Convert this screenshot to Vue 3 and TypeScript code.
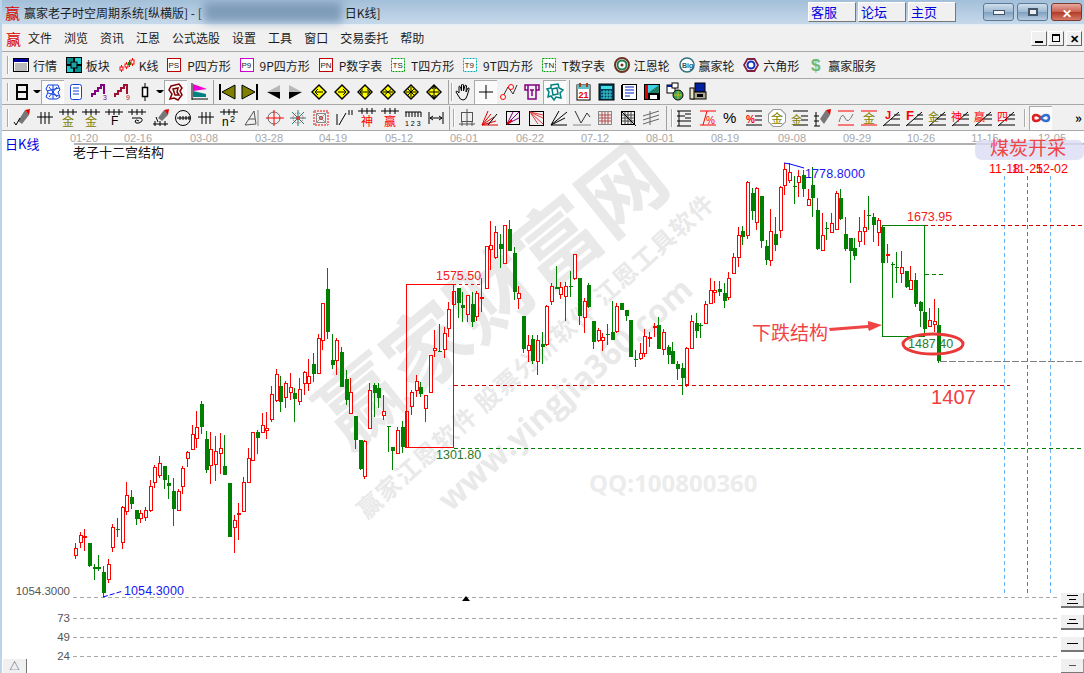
<template>
  <div class="window">
    <div class="titlebar">
      <span class="logo">赢</span>
      <span class="title">赢家老子时空周期系统[纵横版] - [</span>
      <span class="blur"></span>
      <span class="title">日K线]</span>
      <div class="links">
        <button v-for="l in links" :key="l" class="link">{{ l }}</button>
      </div>
      <div class="caps">
        <span class="cap"><i class="cap-min"></i></span>
        <span class="cap"><i class="cap-max"></i></span>
        <span class="cap cap-close">✕</span>
      </div>
    </div>

    <div class="menubar">
      <span class="logo logo-sm">赢</span>
      <span v-for="m in menus" :key="m" class="menu">{{ m }}</span>
      <div class="mdi">
        <span class="mdi-btn"><i class="mdi-min"></i></span>
        <span class="mdi-btn"><i class="mdi-restore"></i></span>
        <span class="mdi-btn mdi-x">✕</span>
      </div>
    </div>

    <div class="row row-main">
      <i class="grip"></i>
      <div v-for="a in mainTools" :key="a.label" class="tool">
        <svg v-if="a.narrow" class="ic-n" viewBox="0 0 14 14" v-html="a.svg"></svg>
        <svg v-else class="ic-w" viewBox="0 0 16 16" v-html="a.svg"></svg>
        <span>{{ a.label }}</span>
      </div>
    </div>

    <div class="row row-icons">
      <template v-for="(b, i) in row3" :key="i">
        <i v-if="b.kind === 'grip'" class="grip" :class="b.cls"></i>
        <i v-else-if="b.kind === 'sep'" class="sep" :class="b.cls"></i>
        <i v-else-if="b.kind === 'caret'" class="caret" :class="b.cls"></i>
        <span v-else class="slot" :class="{ sel: b.sel }"><svg viewBox="0 0 20 20" v-html="b.svg"></svg></span>
      </template>
    </div>

    <div class="row row-icons">
      <template v-for="(b, i) in row4" :key="i">
        <i v-if="b.kind === 'grip'" class="grip" :class="b.cls"></i>
        <i v-else-if="b.kind === 'sep'" class="sep" :class="b.cls"></i>
        <span v-else class="slot" :class="{ sel: b.sel }"><svg viewBox="0 0 20 20" v-html="b.svg"></svg></span>
      </template>
      <span class="more">»</span>
    </div>

    <div class="chart">
      <svg class="plot" viewBox="0 131 1084 542" width="1084" height="542">
        <!-- watermark -->
        <g class="wm">
          <text class="wm-big" x="492" y="326" transform="rotate(-39 492 296)" text-anchor="middle">赢家财富网</text>
          <text class="wm-mid" x="535" y="365" transform="rotate(-42 535 355)" text-anchor="middle">赢家江恩软件  股票分析软件  江恩工具软件</text>
          <text class="wm-url" x="566" y="405" transform="rotate(-42 566 395)" text-anchor="middle">www.yingjia360.com</text>
          <text class="wm-qq" x="589" y="492">QQ:100800360</text>
        </g>

        <!-- date axis -->
        <line x1="74" y1="144" x2="1084" y2="144" stroke="#b0b0b0" stroke-width="2" />
        <text v-for="d in dates" :key="d.t" class="date" :x="d.x" y="142" text-anchor="middle">{{ d.t }}</text>

        <text class="period" x="5" y="149">日K线</text>
        <text class="struct" x="73" y="157">老子十二宫结构</text>

        <!-- guide lines -->
        <line v-for="y in [597, 618, 637, 656]" :key="y" x1="73" :y1="y + 0.5" x2="1060" :y2="y + 0.5" class="guide" />
        <line x1="1004.5" y1="176" x2="1004.5" y2="594" stroke="#6ab4f5" stroke-dasharray="4 3" />
        <line x1="1027.5" y1="176" x2="1027.5" y2="594" stroke="#c85050" stroke-dasharray="4 3" />
        <line x1="1050.5" y1="176" x2="1050.5" y2="594" stroke="#6ab4f5" stroke-dasharray="4 3" />

        <line x1="924" y1="225.5" x2="1084" y2="225.5" stroke="#d00000" stroke-dasharray="4 3" />
        <line x1="925" y1="274.5" x2="946" y2="274.5" stroke="#008000" stroke-dasharray="4 3" />
        <line x1="940" y1="361.5" x2="1084" y2="361.5" stroke="#808080" stroke-dasharray="7 2" />
        <line x1="454" y1="385.5" x2="1010" y2="385.5" stroke="#d00000" stroke-dasharray="4 3" />
        <line x1="454" y1="448.5" x2="1084" y2="448.5" stroke="#008000" stroke-dasharray="4 3" />
        <line x1="453" y1="284.5" x2="480" y2="284.5" stroke="#f00" stroke-dasharray="3 3" />

        <!-- candles -->
        <g v-for="c in candles" :key="c[0]">
          <line :x1="c[0] + 0.5" :y1="c[1]" :x2="c[0] + 0.5" :y2="c[2]" :stroke="c[5] ? '#f00' : '#008000'" />
          <rect v-if="c[5]" :x="c[0] - 0.5" :y="c[3] + 0.5" width="3" :height="Math.max(c[4] - c[3], 1)" fill="#fff" stroke="#f00" />
          <rect v-else :x="c[0] - 1" :y="c[3]" width="4" :height="Math.max(c[4] - c[3], 1)" fill="#008000" />
        </g>

        <!-- structure boxes -->
        <rect x="406.5" y="284.5" width="47" height="163" fill="none" stroke="#f00" />
        <rect x="882.5" y="225.5" width="42" height="111" fill="none" stroke="#008000" />

        <!-- labels -->
        <text class="val red" x="436" y="280">1575.50</text>
        <text class="val green" x="436" y="459">1301.80</text>
        <text class="val red" x="907" y="221">1673.95</text>
        <text class="val green" x="908" y="348">1487.40</text>
        <text class="val blue mono" x="805" y="178">1778.8000</text>
        <text class="val blue mono" x="124" y="595">1054.3000</text>
        <polyline points="784,163 790,164 804,168" fill="none" stroke="#00f" />
        <line x1="103" y1="597" x2="123" y2="591" stroke="#00f" stroke-dasharray="5 2" />

        <text class="axis" x="70" y="595" text-anchor="end">1054.3000</text>
        <text class="axis" x="70" y="622" text-anchor="end">73</text>
        <text class="axis" x="70" y="641" text-anchor="end">49</text>
        <text class="axis" x="70" y="660" text-anchor="end">24</text>
        <polygon points="462,601 470,601 466,596" fill="#000" />

        <!-- hand drawn notes -->
        <ellipse cx="933" cy="344" rx="30" ry="10" fill="none" stroke="#e83838" stroke-width="3" />
        <text class="note" x="752" y="340">下跌结构</text>
        <polygon points="829,328 868,325 868,321 882,325 869,331 868,328 830,331" fill="#f04545" />
        <text class="note-num" x="931" y="404">1407</text>

        <!-- sector tag -->
        <rect x="975" y="140" width="109" height="20" rx="7" fill="#dcdcf6" opacity="0.8" />
        <text class="sector" x="990" y="155">煤炭开采</text>
        <text class="val red ticks" x="989" y="173">11-18</text>
        <text class="val red ticks" x="1012" y="173">11-25</text>
        <text class="val red ticks" x="1036" y="173">12-02</text>
      </svg>

      <div class="zoom">
        <span class="zoom-btn"><i></i><i class="short"></i><i></i></span>
        <span class="zoom-btn"><i class="short"></i><i></i></span>
        <span class="zoom-btn"><i></i></span>
        <span class="zoom-btn"><i class="mini"></i></span>
      </div>
      <span class="tab">△</span>
    </div>
  </div>
</template>

<script setup lang="ts">
type Bar = { kind?: 'grip' | 'sep' | 'caret'; cls?: string; svg?: string; sel?: boolean }

const links = ['客服', '论坛', '主页']
const menus = ['文件', '浏览', '资讯', '江恩', '公式选股', '设置', '工具', '窗口', '交易委托', '帮助']

const dates = [
  { t: '01-20', x: 84 }, { t: '02-16', x: 138 }, { t: '03-08', x: 204 }, { t: '03-28', x: 269 },
  { t: '04-19', x: 333 }, { t: '05-12', x: 399 }, { t: '06-01', x: 464 }, { t: '06-22', x: 530 },
  { t: '07-12', x: 595 }, { t: '08-01', x: 660 }, { t: '08-19', x: 725 }, { t: '09-08', x: 792 },
  { t: '09-29', x: 857 }, { t: '10-26', x: 921 }, { t: '11-15', x: 985 }, { t: '12-05', x: 1052 }
]

// svg bits
const tx = (x: number, y: number, s: string, fill: string, size: number, weight = 'normal') =>
  `<text x="${x}" y="${y}" fill="${fill}" font-size="${size}" font-weight="${weight}" font-family="Liberation Sans,Noto Sans CJK SC,sans-serif">${s}</text>`
const p = (d: string, stroke = '#000', w = 1) => `<path d="${d}" fill="none" stroke="${stroke}" stroke-width="${w}"/>`
const f = (pts: string, fill: string) => `<polygon points="${pts}" fill="${fill}"/>`
const box = (code: string, color: string, dash = false) =>
  `<rect x="0.5" y="0.5" width="13" height="13" fill="#fff" stroke="${color}" ${dash ? 'stroke-dasharray="2 1"' : ''}/>` + tx(1.5, 10, code, '#222', 8)

const mainTools = [
  { label: '行情', svg: '<rect x="0.5" y="1.5" width="15" height="13" fill="#fff" stroke="#000"/><rect x="1" y="2" width="14" height="3" fill="#0000a0"/>' + p('M2 7H14M2 9H14M2 11H14M2 13H14', '#777') },
  { label: '板块', svg: '<rect width="16" height="16" y="0" fill="#000"/><rect x="1" y="1" width="6" height="6" fill="#009090"/><rect x="9" y="1" width="6" height="6" fill="#20c8c8"/><rect x="1" y="9" width="6" height="6" fill="#20c8c8"/><rect x="9" y="9" width="6" height="6" fill="#009090"/><rect x="5" y="5" width="6" height="6" fill="#20a0a0" stroke="#000"/>' },
  { label: 'K线', svg: p('M2.5 8V15M7.5 5V12M13.5 1V9', '#f00') + p('M10.5 3V10', '#080') + '<rect x="1" y="10" width="3" height="3" fill="#fff" stroke="#f00"/><rect x="6" y="7" width="3" height="3" fill="#fff" stroke="#f00"/><rect x="9" y="5" width="3" height="3" fill="#080"/><rect x="12" y="3" width="3" height="4" fill="#fff" stroke="#f00"/>' },
  { label: 'P四方形', narrow: true, svg: box('PS', '#c00000') },
  { label: '9P四方形', narrow: true, svg: box('P9', '#d000d0') },
  { label: 'P数字表', narrow: true, svg: box('PN', '#c00000') },
  { label: 'T四方形', narrow: true, svg: box('TS', '#00a000', true) },
  { label: '9T四方形', narrow: true, svg: box('T9', '#00b0b0', true) },
  { label: 'T数字表', narrow: true, svg: box('TN', '#00a000', true) },
  { label: '江恩轮', svg: '<circle cx="8" cy="8" r="7" fill="#fff" stroke="#703020" stroke-width="2"/><circle cx="8" cy="8" r="4.5" fill="none" stroke="#208050" stroke-width="2"/><circle cx="8" cy="8" r="1.5" fill="#703020"/>' },
  { label: '赢家轮', svg: '<circle cx="8" cy="8" r="7" fill="#fff" stroke="#307080" stroke-width="1.5"/>' + tx(3, 10.5, 'Big', '#206070', 7, 'bold') },
  { label: '六角形', svg: f('4,1 12,1 16,8 12,15 4,15 0,8', '#802040') + f('5,3 11,3 14,8 11,13 5,13 2,8', '#fff') + '<circle cx="8" cy="8" r="3.5" fill="none" stroke="#1030c0" stroke-width="2"/>' },
  { label: '赢家服务', svg: tx(3, 14, '$', '#70b870', 17, 'bold') }
]

const diamond = (inner: string) => f('10,2 18,10 10,18 2,10', '#000') + f('10,4 16,10 10,16 4,10', '#ff0') + p(inner)
const ic = (svg: string, sel = false): Bar => ({ svg, sel })
const ticks = (y: number, xs: number[], c = '#000') => p(`M1 ${y}H19` + xs.map(x => `M${x} ${y - 3}V${y + 3}`).join(''), c)
const fan = (c = '#000') => p('M2 17H18M9 11H18M12 7H18M1 18L17 4', c)
const topBot = (c = '#f00') => p('M2 3H18M2 17H18', c)

const row3: Bar[] = [
  { kind: 'grip', cls: 'g0' },
  ic(p('M5 3H15V17H5ZM5 10H15', '#000', 2)),
  { kind: 'caret' },
  ic(p('M5 3H15L17 8 15 10 17 15 14 17H6L3 15 5 10 3 7ZM4 9L16 6M5 11L16 14M10 3V17M6 5L14 15M14 5L6 15', '#1040e0'), true),
  ic(`<rect x="4.5" y="2.5" width="11" height="15" rx="2" fill="#fff" stroke="#1040e0"/>` + p('M7 6H13M7 9H13M7 12H13', '#1040e0')),
  ic(p('M3 15V12H6V9H9V6H12V3H15V12', '#800080', 2) + tx(14, 18, '3', '#800080', 7)),
  ic(p('M3 15V12H6V9H9V6H12V3H15V12', '#a01030', 2) + tx(14, 18, '9', '#a01030', 7)),
  ic(p('M10 1V19') + '<rect x="7.5" y="5.5" width="5" height="9" fill="#fff" stroke="#000" stroke-width="1.5"/>'),
  { kind: 'caret', cls: 'c2' },
  ic(p('M5 4L13 2 16 6 14 9 16 13 12 18 8 16 4 17 6 12 3 8ZM7 7L12 6 11 10 13 13 9 13 8 10Z', '#800000', 1.5), true),
  ic(f('4,2 18,7 4,9', '#f000d0') + f('4,9 17,12 17,15 4,15', '#008080') + p('M3 1V18M3 17H19', '#000')),
  { kind: 'sep', cls: 's0' },
  ic(p('M3 2V18', '#000', 2) + f('18,3 18,17 5,10', '#808000') + p('M18 3V17L5 10Z')),
  ic(p('M17 2V18', '#000', 2) + f('2,3 2,17 15,10', '#808000') + p('M2 3V17L15 10Z')),
  ic(f('17,3 17,10 4,10', '#b8b8b8') + f('17,17 17,10 4,10', '#000')),
  ic(f('3,3 3,10 16,10', '#b8b8b8') + f('3,17 3,10 16,10', '#000')),
  ic(diamond('M6 10H14M6 10L9 7M6 10L9 13')),
  ic(diamond('M6 10H14M14 10L11 7M14 10L11 13')),
  ic(diamond('M5 10H15M5 10L8 7.5M5 10L8 12.5M15 10L12 7.5M15 10L12 12.5')),
  ic(diamond('M5 10H15M10 10L7 7.5M10 10L7 12.5M10 10L13 7.5M10 10L13 12.5')),
  ic(diamond('M10 5V15M5 10H15M7 7L13 13M13 7L7 13')),
  ic(diamond('M10 4V16M5 10H15M10 4L8 7M10 4L12 7M10 16L8 13M10 16L12 13')),
  { kind: 'sep', cls: 's1' },
  { kind: 'grip', cls: 'g2' },
  ic(p('M6 11V5Q6 3 7.5 5L8.5 9V3Q9.5 1 10.5 3V9L12 3.5Q13 2.5 13.5 4L13 10 15 6Q16.5 5.5 16 7.5L14 14Q13 18 10 18 7 18 5.5 14L3 10Q3 8.5 4.5 9.5Z')),
  ic(p('M10 3V17M3 10H17'), true),
  ic(p('M3 16L9 5 14 12 18 3', '#333') + '<circle cx="4" cy="15" r="2.5" fill="#fff" stroke="#f00"/><circle cx="12" cy="5" r="2.5" fill="#fff" stroke="#f00"/>'),
  ic(p('M3 3H17V8H14V17H6V8H3ZM6 3V8M14 3V8M8 8H12M10 8V14', '#800080', 1.5)),
  ic(p('M6 3L13 2 14 6 18 8 15 11 16 16 11 15 9 18 6 14 3 15 4 10 2 7 6 6ZM7 7L12 6 13 12 8 13Z', '#008080', 1.5), true),
  { kind: 'sep', cls: 's2' },
  ic('<rect x="4" y="3" width="13" height="15" fill="#fff" stroke="#000"/><rect x="4" y="3" width="13" height="4" fill="#60c0c8"/>' + p('M7 1V5M14 1V5', '#a04020', 2) + tx(5.5, 16, '21', '#e00000', 9, 'bold')),
  ic('<rect x="3" y="2" width="15" height="16" fill="#004060" stroke="#000"/><rect x="5" y="4" width="11" height="3" fill="#40e0e0"/>' + p('M5 10H16M5 13H16M5 16H16M8 8V17M11 8V17M14 8V17', '#40d0d0')),
  ic('<rect x="3.5" y="2.5" width="14" height="15" fill="#fff" stroke="#000"/>' + p('M6 5H15M6 8H15M6 11H15M6 14H11', '#0020c0') + p('M3 3V17', '#000', 2)),
  ic('<rect x="2" y="2" width="16" height="16" fill="#000"/><rect x="3" y="3" width="3" height="14" fill="#e00000"/><rect x="6" y="3" width="11" height="8" fill="#40d0e8"/>' + f('6,11 17,3 17,11', '#208060') + '<rect x="8" y="13" width="7" height="4" fill="#fff"/>'),
  ic('<rect x="2" y="3" width="8" height="8" fill="#fff" stroke="#000"/><rect x="2" y="3" width="8" height="2" fill="#0020a0"/><rect x="7" y="1" width="6" height="5" fill="#fff" stroke="#000"/><circle cx="13" cy="13" r="5" fill="#40a060" stroke="#000"/>' + p('M9 13H17M13 9V17', '#d0c000')),
  ic('<rect x="7" y="1" width="10" height="9" fill="#0020a0" stroke="#000"/><rect x="4" y="10" width="14" height="7" fill="#b0a890" stroke="#000"/><rect x="2" y="6" width="4" height="11" fill="#e8e0c8" stroke="#000"/><rect x="9" y="12" width="6" height="3" fill="#000"/>')
]

const row4: Bar[] = [
  { kind: 'grip', cls: 'g0' },
  ic(f('6,13 13,2 17,7 10,16', '#777') + f('13,2 17,7 18,1', '#e00000') + p('M2 14L4 17 8 10')),
  ic(p('M2 9H18M6 4V16M10 4V16M14 4V16')),
  ic(ticks(4, [5, 10, 15]) + tx(4, 18, '金', '#808000', 12)),
  ic(ticks(4, [5, 10, 15]) + tx(4, 18, '金', '#808000', 12)),
  ic(ticks(4, [5, 10, 15]) + tx(7, 17, 'F', '#000', 12)),
  ic(ticks(4, [5, 10, 15]) + p('M5 10H14Q17 13 12 15 8 16 8 13 9 11 12 13')),
  ic(f('8,10 14,2 18,7 12,13', '#777') + f('14,2 18,7 19,1', '#e00000') + p('M3 16H18M5 13V18M10 13V18M15 13V18M8 14L6 9')),
  ic('<circle cx="10" cy="10" r="7.5" fill="none" stroke="#000"/>' + p('M4 10H17M7 8V12M10 8V12M13 8V12M16 8V12')),
  ic(p('M2 9H18M6 4V16M10 4V16M14 4V16')),
  ic(ticks(4, [5, 10, 15]) + tx(3, 18, 'n', '#000', 12) + tx(11, 14, '2', '#000', 9)),
  ic(p('M3 17L12 3 14 16ZM7 11L13 11', '#555') + p('M16 2V18', '#888')),
  ic('<circle cx="9" cy="10" r="6" fill="none" stroke="#666"/>' + p('M9 2V18M1 10H19', '#f00')),
  ic(p('M10 2V18M2 10H18M4 4L16 16M16 4L4 16', '#208080') + '<circle cx="10" cy="10" r="5" fill="none" stroke="#d04040" stroke-dasharray="1 1"/><circle cx="10" cy="10" r="2" fill="#d04040"/>'),
  ic('<rect x="3" y="3" width="14" height="14" fill="none" stroke="#f00" stroke-dasharray="2 1"/><rect x="5.5" y="5.5" width="9" height="9" fill="none" stroke="#888"/><rect x="8" y="8" width="4" height="4" fill="#d04040"/>' + p('M3 3L17 17M17 3L3 17', '#999')),
  ic(p('M3 17V6M5 17L12 5M15 2V7M18 2V7')),
  ic(ticks(3, [5, 10, 15]) + tx(4, 18, '神', '#f00', 12)),
  ic(ticks(3, [5, 10, 15]) + tx(4, 18, '赢', '#f00', 12)),
  ic(p('M2 4H18M3 4V9M6 4V9M9 4V9M12 4V9M15 4V9M18 4V9') + tx(2, 18, '1 2 3', '#000', 7)),
  ic(p('M3 4V16M17 4V16M4 10H16M4 10L7 8M4 10L7 12M16 10L13 8M16 10L13 12')),
  { kind: 'sep', cls: 's3' },
  { kind: 'grip', cls: 'g3' },
  ic('<rect x="4.5" y="4.5" width="11" height="9" fill="none" stroke="#555"/>' + p('M10 1V18M2 16H18M5 14V18M15 14V18', '#555')),
  ic(p('M2 17L8 3M2 17L11 6M2 17L14 9M2 17L16 13M2 17H18', '#e00000') + p('M8 17L17 6', '#000')),
  ic('<rect x="3.5" y="3.5" width="13" height="13" fill="none" stroke="#000"/>' + p('M4 16L16 4M4 16L10 4M4 16L16 10', '#800080') + p('M4 16L9 12', '#e00000', 2)),
  ic('<rect x="3.5" y="3.5" width="14" height="14" fill="none" stroke="#000"/>' + p('M4 4L17 16M4 4L12 16M4 4L17 10M4 4L17 7', '#e04040')),
  ic(p('M2 17L18 4M2 17L16 10M2 17H18M2 17L10 3')),
  ic(p('M3 3L9 15 15 5 18 9', '#333') + p('M1 17H19', '#888', 1)),
  ic('<rect x="3.5" y="3.5" width="13" height="13" fill="#eee" stroke="#888"/>' + p('M7 4V16M10 4V16M13 4V16M4 7H16M4 10H16M4 13H16', '#b05050')),
  ic('<rect x="3.5" y="3.5" width="13" height="13" fill="#eee" stroke="#000"/>' + p('M7 4V16M10 4V16M13 4V16M4 7H16M4 10H16M4 13H16', '#444') + p('M3 3L18 18')),
  ic(p('M2 8L18 3M2 12L18 7M2 16L18 11M9 3V17', '#666')),
  { kind: 'sep', cls: 's4' },
  { kind: 'grip', cls: 'g4' },
  ic(p('M4 3V18M2 3H16M2 8H10M2 13H16M2 18H16M10 6H16M10 10H16')),
  ic(topBot() + p('M5 17L9 3', '#f00') + tx(8, 16, '%', '#f00', 10)),
  ic(tx(2, 15, '%', '#000', 15)),
  ic(p('M2 3H18M2 17H18M11 8H18M11 12H18') + tx(2, 15, '%', '#f00', 10, 'bold')),
  ic(f('6,1 14,1 19,6 19,14 14,19 6,19 1,14 1,6', '#999') + f('6.5,2 13.5,2 18,6.5 18,13.5 13.5,18 6.5,18 2,13.5 2,6.5', '#fff') + tx(4, 14.5, '金', '#808000', 12)),
  ic(p('M3 3H18M11 8H18M11 12H18M3 17H18') + tx(1, 16, '金', '#808000', 11)),
  ic(p('M3 4V18M1 8H6M1 13H6M1 18H7') + f('7,11 13,2 17,7 11,16', '#777') + f('13,2 17,7 18,1', '#e00000')),
  ic(topBot() + p('M3 14Q6 3 9 10T17 6', '#777')),
  ic(topBot() + tx(4, 15, '金', '#808000', 12)),
  ic(fan() + tx(3, 11, 'J', '#f00', 11, 'bold')),
  ic(fan() + tx(1, 12, 'F', '#f00', 13, 'bold')),
  ic(fan() + tx(0, 13, '金', '#808000', 11)),
  ic(fan() + tx(0, 13, '神', '#f00', 11)),
  ic(fan() + tx(0, 13, '赢', '#f00', 11)),
  ic(fan() + tx(0, 13, '四', '#f00', 11)),
  { kind: 'grip', cls: 'g1' },
  ic(p('M10 10C7 6 2 6 2 10S7 14 10 10', '#e02020', 2.5) + p('M10 10C13 6 18 6 18 10S13 14 10 10', '#3070d0', 2.5), true)
]

// x, wick top, wick bottom, body top, body bottom, up
const candles: [number, number, number, number, number, number][] = [
  [75, 543, 559, 548, 555, 1], [80, 532, 548, 535, 542, 1], [84, 529, 551, 536, 537, 1], [89, 543, 567, 543, 566, 0],
  [94, 564, 580, 567, 569, 0], [98, 555, 571, 567, 569, 0], [103, 566, 597, 572, 593, 0], [108, 559, 583, 564, 579, 1],
  [112, 524, 552, 527, 547, 1], [117, 518, 537, 529, 530, 0], [122, 506, 549, 507, 542, 1], [126, 482, 515, 495, 511, 1],
  [131, 490, 509, 497, 504, 0], [136, 510, 525, 510, 519, 0], [140, 510, 523, 513, 518, 1], [145, 507, 521, 510, 517, 1],
  [150, 480, 512, 486, 510, 1], [154, 465, 488, 467, 482, 1], [159, 456, 478, 463, 475, 1], [164, 466, 489, 466, 480, 0],
  [168, 475, 499, 483, 486, 0], [173, 478, 526, 491, 509, 0], [178, 489, 510, 491, 510, 1], [182, 466, 494, 468, 486, 1],
  [187, 451, 467, 452, 458, 1], [192, 425, 449, 434, 449, 1], [196, 411, 448, 427, 438, 1], [201, 401, 434, 404, 427, 0],
  [206, 431, 473, 439, 470, 0], [210, 432, 484, 449, 465, 1], [215, 436, 481, 451, 464, 1], [220, 433, 474, 448, 453, 1],
  [224, 435, 475, 466, 475, 0], [229, 483, 537, 483, 537, 0], [234, 515, 553, 520, 527, 1], [238, 503, 540, 513, 514, 1],
  [243, 477, 512, 482, 511, 1], [248, 448, 482, 458, 482, 1], [252, 432, 461, 432, 460, 1], [257, 430, 454, 432, 438, 0],
  [262, 413, 433, 425, 432, 1], [266, 412, 439, 428, 430, 1], [271, 386, 422, 394, 419, 1], [276, 369, 402, 374, 400, 1],
  [280, 376, 412, 386, 402, 0], [285, 381, 408, 383, 397, 1], [290, 373, 400, 387, 392, 1], [294, 388, 422, 393, 399, 0],
  [299, 378, 405, 389, 401, 1], [304, 371, 395, 372, 383, 1], [308, 359, 391, 376, 383, 1], [313, 353, 382, 364, 374, 0],
  [318, 334, 374, 338, 373, 1], [322, 303, 350, 303, 340, 1], [327, 268, 339, 289, 332, 0], [332, 334, 369, 360, 365, 0],
  [336, 338, 375, 340, 360, 1], [341, 347, 387, 352, 387, 0], [346, 370, 405, 379, 400, 0], [350, 378, 414, 392, 413, 1],
  [355, 416, 449, 416, 440, 0], [360, 440, 470, 440, 469, 0], [364, 440, 479, 441, 476, 1], [369, 383, 428, 390, 428, 1],
  [374, 383, 417, 385, 393, 0], [378, 383, 408, 388, 398, 0], [383, 395, 420, 411, 415, 1], [388, 426, 452, 426, 427, 0],
  [392, 447, 470, 447, 451, 0], [397, 427, 453, 430, 453, 1], [402, 421, 453, 427, 447, 0], [406, 411, 447, 411, 447, 1],
  [411, 390, 415, 392, 406, 1], [416, 375, 397, 381, 390, 1], [420, 382, 397, 387, 394, 0], [425, 395, 422, 395, 408, 1],
  [430, 355, 393, 355, 392, 1], [434, 330, 357, 348, 350, 1], [439, 324, 351, 351, 352, 0], [444, 327, 358, 333, 349, 1],
  [448, 302, 337, 309, 328, 1], [453, 285, 304, 291, 304, 1], [458, 288, 318, 288, 303, 0], [462, 292, 322, 305, 308, 0],
  [467, 295, 322, 295, 314, 1], [472, 292, 327, 304, 322, 0], [476, 291, 321, 293, 316, 1], [481, 278, 312, 297, 298, 1],
  [486, 246, 288, 246, 288, 1], [490, 221, 270, 245, 249, 1], [495, 226, 259, 232, 257, 1], [500, 234, 268, 244, 249, 0],
  [504, 225, 263, 225, 263, 1], [509, 220, 251, 229, 251, 0], [514, 247, 300, 253, 292, 0], [518, 286, 309, 293, 298, 1],
  [523, 316, 353, 316, 349, 0], [528, 335, 362, 345, 350, 1], [532, 335, 364, 339, 361, 0], [537, 335, 375, 340, 361, 1],
  [542, 332, 364, 344, 347, 0], [546, 305, 346, 306, 344, 1], [551, 283, 305, 286, 301, 1], [556, 266, 289, 287, 289, 0],
  [560, 282, 299, 287, 294, 1], [565, 282, 321, 286, 296, 1], [570, 271, 297, 286, 287, 0], [574, 254, 280, 254, 278, 1],
  [579, 278, 325, 278, 316, 0], [584, 298, 333, 301, 317, 1], [588, 283, 308, 285, 307, 0], [593, 321, 349, 321, 342, 0],
  [598, 328, 342, 330, 340, 1], [602, 333, 351, 337, 340, 1], [607, 324, 345, 334, 335, 0], [612, 301, 340, 332, 340, 0],
  [616, 303, 333, 306, 331, 1], [621, 303, 310, 303, 310, 0], [626, 310, 321, 310, 316, 0], [630, 320, 357, 320, 357, 0],
  [635, 350, 367, 359, 360, 0], [640, 343, 360, 353, 358, 1], [644, 329, 357, 336, 353, 1], [649, 332, 347, 337, 338, 1],
  [654, 323, 337, 326, 327, 1], [658, 317, 349, 325, 349, 0], [663, 329, 355, 332, 349, 1], [668, 345, 364, 347, 355, 0],
  [672, 342, 364, 351, 364, 0], [677, 361, 380, 364, 369, 0], [682, 363, 395, 368, 378, 0], [686, 347, 387, 348, 384, 1],
  [691, 315, 349, 321, 348, 1], [696, 313, 338, 323, 331, 0], [700, 323, 338, 325, 326, 0], [705, 301, 323, 304, 323, 1],
  [710, 278, 303, 290, 303, 1], [714, 281, 303, 290, 292, 1], [719, 281, 296, 289, 292, 0], [724, 283, 308, 293, 301, 0],
  [728, 272, 300, 278, 297, 1], [733, 253, 273, 257, 273, 1], [738, 227, 267, 235, 257, 1], [742, 226, 245, 231, 237, 0],
  [747, 181, 239, 182, 235, 1], [752, 188, 220, 193, 211, 0], [756, 187, 230, 188, 222, 1], [761, 196, 248, 196, 241, 0],
  [766, 240, 265, 246, 260, 0], [770, 209, 266, 231, 260, 1], [775, 217, 251, 234, 245, 0], [780, 186, 238, 187, 230, 1],
  [784, 163, 195, 169, 185, 1], [789, 163, 183, 172, 180, 1], [794, 176, 204, 186, 187, 0], [798, 170, 197, 176, 182, 1],
  [803, 170, 197, 175, 189, 0], [808, 189, 205, 199, 205, 1], [812, 167, 217, 185, 198, 0], [817, 198, 250, 210, 249, 0],
  [822, 213, 251, 235, 250, 1], [826, 222, 240, 228, 229, 0], [831, 213, 232, 223, 232, 1], [836, 191, 230, 193, 229, 1],
  [840, 189, 220, 198, 219, 0], [845, 217, 251, 234, 249, 0], [850, 238, 283, 238, 251, 0], [854, 238, 260, 248, 256, 0],
  [859, 217, 247, 231, 241, 1], [864, 210, 245, 227, 231, 1], [868, 196, 230, 215, 216, 0], [873, 213, 242, 217, 225, 0],
  [878, 218, 246, 220, 232, 1], [882, 227, 263, 227, 263, 0], [887, 244, 263, 254, 255, 1], [892, 262, 298, 264, 265, 0],
  [896, 252, 283, 267, 268, 0], [901, 251, 283, 267, 273, 1], [906, 271, 288, 271, 287, 0], [910, 266, 289, 280, 289, 1],
  [915, 273, 307, 280, 304, 0], [920, 301, 327, 302, 311, 0], [924, 312, 334, 312, 329, 0], [929, 308, 327, 320, 326, 1],
  [934, 299, 332, 321, 324, 1], [938, 308, 363, 325, 361, 0]
]
</script>

<style scoped>
.window {
  width: 1084px;
  height: 673px;
  display: flex;
  flex-direction: column;
  overflow: hidden;
  background: #f0f0f0;
  font-family: "Noto Sans CJK SC", "Liberation Sans", sans-serif;
  font-size: 12px;
  color: #1c1c1c;
  border-left: 2px solid #bcd4ea;
  box-sizing: border-box;
}

.titlebar {
  height: 25px;
  margin-left: -2px;
  flex: none;
  display: flex;
  align-items: center;
  padding-left: 5px;
  background: linear-gradient(180deg, #a3bfd9, #c6d9ea);
  border-bottom: 1px solid #e6eef6;
  box-sizing: border-box;
}
.logo {
  font-size: 15px;
  line-height: 1;
  color: #d80000;
  margin-right: 4px;
}
.title { white-space: pre; letter-spacing: 0; }
.blur {
  width: 138px;
  height: 20px;
  margin: 0 3px 0 2px;
  background: #7f9bb9;
  filter: blur(4px);
}
.links {
  margin-left: auto;
  display: flex;
  gap: 2px;
  margin-right: 27px;
}
.link {
  width: 48px;
  height: 20px;
  padding: 0 0 0 2px;
  text-align: left;
  font: 13px "Noto Sans CJK SC", sans-serif;
  line-height: 16px;
  color: #0000e0;
  background: #f0f0f0;
  border: 1px solid;
  border-color: #fff #777 #777 #fff;
}
.caps { display: flex; gap: 3px; margin-right: 2px; }
.cap {
  width: 31px;
  height: 18px;
  border: 1px solid #5c7a96;
  border-radius: 3px;
  background: linear-gradient(180deg, #cfdeec 0, #9db8d2 50%, #7f9fc0 51%, #b8cde0 100%);
  display: flex;
  align-items: center;
  justify-content: center;
  box-sizing: border-box;
}
.cap-close {
  background: linear-gradient(180deg, #e8a8a0 0, #c8604f 50%, #b03a28 51%, #d47a66 100%);
  border-color: #7a3a30;
  color: #fff;
  font-size: 12px;
  font-weight: 700;
}
.cap-min { width: 10px; height: 3px; background: #f0f4f8; border: 1px solid #456; }
.cap-max { width: 10px; height: 8px; border: 2px solid #456; background: #e8eef4; box-sizing: border-box; }

.menubar {
  height: 27px;
  flex: none;
  display: flex;
  align-items: center;
  padding-left: 4px;
  gap: 12px;
  box-sizing: border-box;
  border-bottom: 1px solid #a8a8a8;
}
.menubar .logo { margin-right: -5px; }
.menu { line-height: 1; }
.mdi { margin-left: auto; display: flex; gap: 1px; margin-right: 2px; }
.mdi-btn {
  width: 16px;
  height: 15px;
  background: #f0f0f0;
  border: 1px solid;
  border-color: #fff #666 #666 #fff;
  box-sizing: border-box;
  display: flex;
  align-items: center;
  justify-content: center;
  font-weight: 700;
  font-size: 11px;
  color: #000;
}
.mdi-min { width: 8px; height: 2px; background: #000; margin-top: 7px; }
.mdi-restore { width: 8px; height: 8px; border: 1px solid #000; border-top-width: 2px; box-sizing: border-box; }
.mdi-x { margin-left: 1px; }

.row {
  flex: none;
  display: flex;
  align-items: center;
  box-sizing: border-box;
  border-bottom: 1px solid #a8a8a8;
  padding-left: 5px;
}
.row-main { height: 27px; }
.row-icons { height: 26px; }

.grip {
  width: 2px;
  height: 18px;
  border-left: 1px solid #aaa;
  border-right: 1px solid #fff;
  box-sizing: border-box;
  flex: none;
}
.g0 { margin-right: 1px; }
.g1 { margin: 0 3.5px 0 5px; }
.g2 { margin: 0 -2px 0 0; }
.g3 { margin: 0 0.5px 0 3px; }
.g4 { margin: 0 1px 0 4px; }

.tool {
  display: flex;
  align-items: center;
  gap: 4px;
  margin-right: 8.8px;
  white-space: nowrap;
}
.row-main .grip { margin-right: 4px; }
.ic-w { width: 16px; height: 16px; flex: none; }
.ic-n { width: 14px; height: 14px; flex: none; margin-right: 2px; }

.slot {
  width: 23px;
  height: 24px;
  flex: none;
  display: flex;
  align-items: center;
  justify-content: center;
  box-sizing: border-box;
}
.slot svg { width: 20px; height: 20px; }
.sel { background: #fafafa; box-shadow: inset 1px 1px 0 #aaa, inset -1px -1px 0 #fff; }

.caret {
  width: 8px;
  flex: none;
  height: 0;
  border-top: 3px solid #000;
  border-left: 3px solid transparent;
  border-right: 3px solid transparent;
  box-sizing: border-box;
}
.sep {
  flex: none;
  height: 24px;
  border-right: 1px solid #a0a0a0;
  box-sizing: border-box;
}
.s0 { width: 4px; margin-right: 1px; }
.s1 { width: 4px; margin-right: 2px; }
.s2 { width: 4px; margin-right: 1px; }
.s3 { width: 3px; }
.s4 { width: 4px; }
.more { margin-left: auto; margin-right: 2px; font-size: 13px; font-weight: 700; color: #000; }

.chart {
  flex: 1;
  position: relative;
  background: #fff;
  margin-left: -2px;
  overflow: hidden;
}
.plot { position: absolute; left: 0; top: 0; display: block; }

.wm text { font-family: "Noto Sans CJK SC", sans-serif; font-weight: 700; fill: #e9e9e9; white-space: pre; }
.wm-big { font-size: 84px; }
.wm .wm-mid { font-size: 24px; letter-spacing: 1.4px; }
.wm .wm-url { font-family: "Open Sans", sans-serif; font-size: 32px; }
.wm .wm-qq { font-family: "Open Sans", sans-serif; font-size: 24px; fill: #ececec; }

.date { font: 11px "Liberation Sans", sans-serif; fill: #a8a8a8; }
.period { font: 13px "Noto Sans CJK SC", sans-serif; fill: #0000e0; }
.struct { font: 13px "Noto Sans CJK SC", sans-serif; fill: #111; }
.guide { stroke: #a8a8a8; stroke-dasharray: 4 3; }
.val { font: 12.5px "Liberation Sans", sans-serif; }
.mono { letter-spacing: 0.1px; }
.red { fill: #f02020; }
.green { fill: #2c7a2c; }
.blue { fill: #1818f0; }
.axis { font: 11.5px "Liberation Sans", sans-serif; fill: #555; }
.ticks { font-size: 12.5px; fill: #f00; }
.note { font: 19px "Noto Sans CJK SC", sans-serif; fill: #f04545; }
.note-num { font: 20px "Liberation Sans", sans-serif; fill: #f04040; letter-spacing: 0.1px; }
.sector { font: 19px "Noto Sans CJK SC", sans-serif; fill: #f04545; }

.zoom {
  position: absolute;
  right: 0;
  top: 462px;
  width: 23px;
  display: flex;
  flex-direction: column;
  gap: 7px;
}
.zoom-btn {
  height: 15px;
  display: flex;
  flex-direction: column;
  align-items: center;
  justify-content: center;
  gap: 3px;
  background: #f0f0f0;
  border-bottom: 2px solid #777;
  border-right: 1px solid #999;
  box-sizing: border-box;
}
.zoom-btn i { width: 11px; height: 1px; background: #000; }
.zoom-btn i.short { width: 7px; }
.zoom-btn i.mini { width: 7px; background: #555; }
.tab {
  position: absolute;
  left: 3px;
  bottom: 0;
  width: 23px;
  height: 14px;
  line-height: 14px;
  font-size: 10px;
  text-align: center;
  background: #f0f0f0;
  border-right: 1px solid #777;
  color: #357;
}
</style>

<style>
html, body { margin: 0; background: #fff; }
</style>
